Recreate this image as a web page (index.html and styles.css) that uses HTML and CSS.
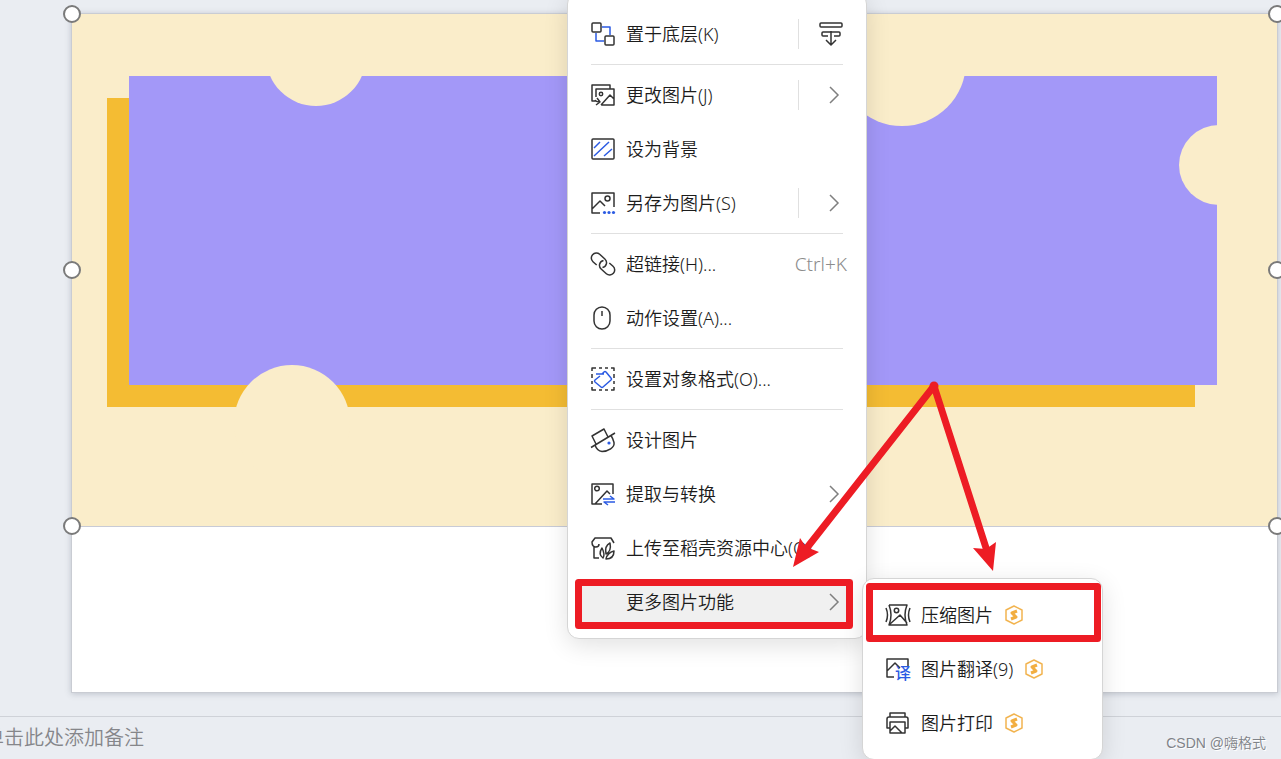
FILE: index.html
```html
<!DOCTYPE html>
<html lang="zh-CN">
<head>
    <meta charset="UTF-8">
    <meta name="viewport" content="width=device-width, initial-scale=1.0">
    <title>演示文稿</title>
    <link rel="stylesheet" href="styles.css">
</head>
<body>
    <main class="stage">
        <div class="slide">
            <div class="picture">
                <svg class="artwork" viewBox="0 0 1205 512" aria-hidden="true">
                    <rect width="1205" height="512" fill="#faedca"/>
                    <rect x="35" y="84" width="1088" height="309" fill="#f4bc33"/>
                    <rect x="57" y="62" width="1088" height="309" fill="#a398f8"/>
                    <g fill="#faedca">
                        <circle cx="244" cy="42" r="50"/>
                        <circle cx="830" cy="48" r="64"/>
                        <circle cx="220" cy="409" r="58"/>
                        <circle cx="1147" cy="151" r="40"/>
                    </g>
                </svg>
                <span class="handle top left"></span>
                <span class="handle middle left"></span>
                <span class="handle bottom left"></span>
                <span class="handle top right"></span>
                <span class="handle middle right"></span>
                <span class="handle bottom right"></span>
            </div>
        </div>
    </main>

    <footer class="notes">
        <input class="notes-input" type="text" placeholder="单击此处添加备注" aria-label="备注">
        <span class="watermark">CSDN @嗨格式</span>
    </footer>

    <nav class="menu context-menu">
        <button class="menu-item">
            <svg class="icon" viewBox="0 0 24 24"><rect x="1" y="1" width="9" height="9" rx="1"/><rect x="14" y="14" width="9" height="9" rx="1"/><path class="blue" d="M11 5h8v8M5 11v8h8"/></svg>
            <span class="label">置于底层(K)</span>
            <span class="split"><svg class="icon" viewBox="0 0 24 24"><rect x="1" y="1" width="22" height="4" rx="1"/><path d="M9 14H4q-1 0-1-1v-2q0-1 1-1h5M15 14h5q1 0 1-1v-2q0-1-1-1h-5M12 9v14M7 18l5 5 5-5M9 10h6"/></svg></span>
        </button>
        <hr>
        <button class="menu-item">
            <svg class="icon" viewBox="0 0 24 24"><path d="M19 6V2H1v16h4M5 14V6h18v16H10M4 17q1 2 5 2M6 15l3 4-4 3M10 22l9-10 4 4"/><circle cx="10" cy="11" r="1.7"/></svg>
            <span class="label">更改图片(J)</span>
            <span class="split"><svg class="chevron" viewBox="0 0 18 18"><path d="M5 1l8 8-8 8"/></svg></span>
        </button>
        <button class="menu-item">
            <svg class="icon" viewBox="0 0 24 24"><rect x="1" y="2" width="22" height="20" rx="1"/><path class="blue" d="M3 11l6-6M3 19L18 5M13 19l8-7"/></svg>
            <span class="label">设为背景</span>
        </button>
        <button class="menu-item">
            <svg class="icon" viewBox="0 0 24 24"><path d="M9 22H1V2h22v14M1 18l8-8 5 5"/><circle cx="16.5" cy="7.5" r="2.5"/><g class="dot"><circle cx="13.5" cy="21.5" r="1.6"/><circle cx="18" cy="21.5" r="1.6"/><circle cx="22.5" cy="21.5" r="1.6"/></g></svg>
            <span class="label">另存为图片(S)</span>
            <span class="split"><svg class="chevron" viewBox="0 0 18 18"><path d="M5 1l8 8-8 8"/></svg></span>
        </button>
        <hr>
        <button class="menu-item">
            <svg class="icon" viewBox="0 0 24 24"><g transform="rotate(42 12 12)"><path d="M8 17H3A5 5 0 0 1 3 7h7a5 5 0 0 1 4 8M16 7h5a5 5 0 0 1 0 10h-7a5 5 0 0 1-4-8"/></g></svg>
            <span class="label">超链接(H)...</span>
            <kbd class="shortcut">Ctrl+K</kbd>
        </button>
        <button class="menu-item">
            <svg class="icon" viewBox="0 0 24 24"><rect x="3" y="1" width="16" height="22" rx="8"/><path d="M11 5v5"/></svg>
            <span class="label">动作设置(A)...</span>
        </button>
        <hr>
        <button class="menu-item">
            <svg class="icon" viewBox="0 0 24 24"><path d="M1 4V1h4M8 1h3M14 1h3M20 1h3v3M23 7v4M23 14v3M23 20v3h-3M17 23h-3M11 23H8M5 23H1v-3M1 17v-3M1 11V7"/><path class="blue" d="M5 7h8M9 9l-5 4q-1 1 0 2l6 5q1 1 2 0l8-7q1-1 0-2l-5-6q-1-1-2 0l-2 2"/></svg>
            <span class="label">设置对象格式(O)...</span>
        </button>
        <hr>
        <button class="menu-item">
            <svg class="icon" viewBox="0 0 24 24"><path d="M5 16L1 8l12-7 4 8M0 19.5L24 5M4 17q2 6 7 6.5c6 0 13-4 12-9q-1-4-3-7"/><circle class="dot" cx="18" cy="15" r="1.6"/></svg>
            <span class="label">设计图片</span>
        </button>
        <button class="menu-item">
            <svg class="icon" viewBox="0 0 24 24"><path d="M22 12V2H1v20h10M4 22L16 9l3 3"/><circle cx="6" cy="6.5" r="2.3"/><path class="blue" d="M12 17h11l-4-3M24 20H13l4 3"/></svg>
            <span class="label">提取与转换</span>
            <svg class="chevron" viewBox="0 0 18 18"><path d="M5 1l8 8-8 8"/></svg>
        </button>
        <button class="menu-item">
            <svg class="icon" viewBox="0 0 24 24"><path d="M8 8q0 3-3 3C2 11 1 9 1 6l3-4h16l3 5M3 11v11h5M12 22c-4-3-3-7-1-10 2 4 3 7 1 10zM15 18c-1-5 0-9 4-11 1 5 0 9-4 11zM15 23c1-5 4-7 8-8 0 5-3 8-8 8z"/></svg>
            <span class="label">上传至稻壳资源中心(O)</span>
        </button>
        <button class="menu-item active">
            <span class="icon"></span>
            <span class="label">更多图片功能</span>
            <svg class="chevron" viewBox="0 0 18 18"><path d="M5 1l8 8-8 8"/></svg>
        </button>
    </nav>

    <nav class="menu sub-menu">
        <button class="menu-item">
            <svg class="icon" viewBox="0 0 24 24"><path d="M3 2h18q-4 10 0 20H3q4-10 0-20M0 5q3 7 0 14M24 5q-3 7 0 14M4 21l10-9 7 8"/><circle cx="10.5" cy="7.5" r="2.2"/></svg>
            <span class="label">压缩图片</span>
            <svg class="coin" viewBox="0 0 20 20"><path d="M10 1l8 4v10l-8 4-8-4V5z"/><path class="mark" d="M13 6L8 8l4 4-5 2"/></svg>
        </button>
        <button class="menu-item">
            <svg class="icon" viewBox="0 0 24 24"><path d="M22 9V2H1v18h7M1 14l8-8 5 5"/><text class="glyph" x="9" y="22">译</text></svg>
            <span class="label">图片翻译(9)</span>
            <svg class="coin" viewBox="0 0 20 20"><path d="M10 1l8 4v10l-8 4-8-4V5z"/><path class="mark" d="M13 6L8 8l4 4-5 2"/></svg>
        </button>
        <button class="menu-item">
            <svg class="icon" viewBox="0 0 24 24"><path d="M4 6V2h15v4M4 17H1V8q0-2 2-2h17q2 0 2 2v9h-3M4 11h15v11H4zM4 20l5-5 7 7"/></svg>
            <span class="label">图片打印</span>
            <svg class="coin" viewBox="0 0 20 20"><path d="M10 1l8 4v10l-8 4-8-4V5z"/><path class="mark" d="M13 6L8 8l4 4-5 2"/></svg>
        </button>
    </nav>

    <!-- red marks drawn over the menus -->
    <svg class="marks" viewBox="0 0 1281 759" aria-hidden="true">
        <g fill="none" stroke="#ed1c24" stroke-width="7" stroke-linejoin="round">
            <rect x="578.5" y="582.5" width="271" height="43"/>
            <rect x="869.5" y="586.5" width="228" height="52"/>
            <path d="M806 549L934 386l53 165"/>
        </g>
        <g fill="#ed1c24">
            <circle cx="934" cy="386" r="4.5"/>
            <path d="M793 567l7-29 6 9 13 5z"/>
            <path d="M993 571l-20-23 13 1 10-7z"/>
        </g>
    </svg>
</body>
</html>
```

FILE: styles.css
```css
body {
    margin: 0;
    min-height: 100vh;
    display: flex;
    flex-direction: column;
    position: relative;
    overflow: hidden;
    background: #eaedf2;
    font-family: 'Noto Sans', 'Noto Sans CJK SC', sans-serif;
    font-size: 18px;
    color: #1c1c1c;
}
.stage {
    flex: 1;
    display: flex;
    padding: 13px 3px 23px 71px;
}
.slide {
    flex: 1;
    background: #fff;
    border: 1px solid #c9ccd3;
    box-shadow: 0 1px 6px rgba(60, 70, 90, 0.25);
}
.picture {
    position: relative;
    border-bottom: 1px solid #c8cbd6;
}
.artwork {
    display: block;
    width: 100%;
}
.handle {
    position: absolute;
    box-sizing: border-box;
    width: 18px;
    height: 18px;
    border: 2px solid #7a7a7a;
    border-radius: 50%;
    background: #fff;
    transform: translate(-50%, -50%);
}
.handle.left {
    left: 0;
}
.handle.right {
    left: 100%;
}
.handle.top {
    top: 0;
}
.handle.middle {
    top: 50%;
}
.handle.bottom {
    top: 100%;
}

/* notes bar */
.notes {
    display: flex;
    align-items: center;
    justify-content: space-between;
    height: 42px;
    padding-right: 15px;
    border-top: 1px solid #cfd2d8;
}
.notes-input {
    flex: 1;
    margin-left: -16px;
    padding: 0 0 2px;
    border: none;
    outline: none;
    background: none;
    font-family: inherit;
    font-size: 20px;
    font-weight: 350;
}
.notes-input::placeholder {
    color: #85868a;
    opacity: 1;
}
.watermark {
    padding-top: 8px;
    font-family: 'Liberation Sans', 'Noto Sans CJK SC', sans-serif;
    font-size: 14px;
    font-weight: 350;
    color: #808388;
    text-shadow: 1px 1px 0 #fff;
}

/* menus */
.menu {
    position: absolute;
    box-sizing: border-box;
    background: #fff;
    border: 1px solid #d5d5d5;
    border-radius: 12px;
    box-shadow: 0 6px 24px rgba(0, 0, 0, 0.12);
}
.context-menu {
    top: -8px;
    left: 567px;
    width: 300px;
    padding: 14px 0 9px;
}
.sub-menu {
    top: 578px;
    left: 862px;
    width: 241px;
    padding: 9px 0;
}
.menu hr {
    height: 1px;
    margin: 3px 23px;
    border: none;
    background: #e0e0e0;
}
.menu-item {
    display: flex;
    align-items: center;
    box-sizing: border-box;
    width: calc(100% - 26px);
    height: 54px;
    margin: 0 13px;
    padding: 0 10px;
    gap: 11px;
    border: solid transparent;
    border-width: 4px 0;
    background: none;
    background-clip: padding-box;
    font: inherit;
    font-weight: 350;
    color: inherit;
    text-align: left;
    white-space: nowrap;
}
.menu-item.active {
    background-color: #f0f0f0;
}
.label {
    padding-bottom: 2px;
}
.context-menu .label {
    flex: 1;
}
.icon {
    flex: none;
    width: 24px;
    height: 24px;
    overflow: visible;
    fill: none;
    stroke: #333;
    stroke-width: 1.5;
    stroke-linejoin: round;
}
.icon .blue {
    stroke: #2b5be3;
}
.icon .dot {
    fill: #2b5be3;
    stroke: none;
}
.icon .glyph {
    fill: #2b5be3;
    stroke: none;
    font-size: 16px;
    font-weight: 500;
}
.split {
    display: flex;
    align-items: center;
    justify-content: flex-end;
    width: 44px;
    height: 30px;
    border-left: 1px solid #e0e0e0;
}
.chevron {
    width: 18px;
    height: 18px;
    fill: none;
    stroke: #7f7f7f;
    stroke-width: 1.5;
}
.shortcut {
    margin-right: -4px;
    font-family: inherit;
    font-size: 19px;
    color: #8c8c8c;
}
.coin {
    width: 20px;
    height: 20px;
    overflow: visible;
    fill: none;
    stroke: #f2b450;
    stroke-width: 1.5;
    stroke-linejoin: round;
}
.coin .mark {
    stroke: #f2ae41;
    stroke-width: 3;
}
.marks {
    position: absolute;
    top: 0;
    left: 0;
    width: 1281px;
    pointer-events: none;
}
```
